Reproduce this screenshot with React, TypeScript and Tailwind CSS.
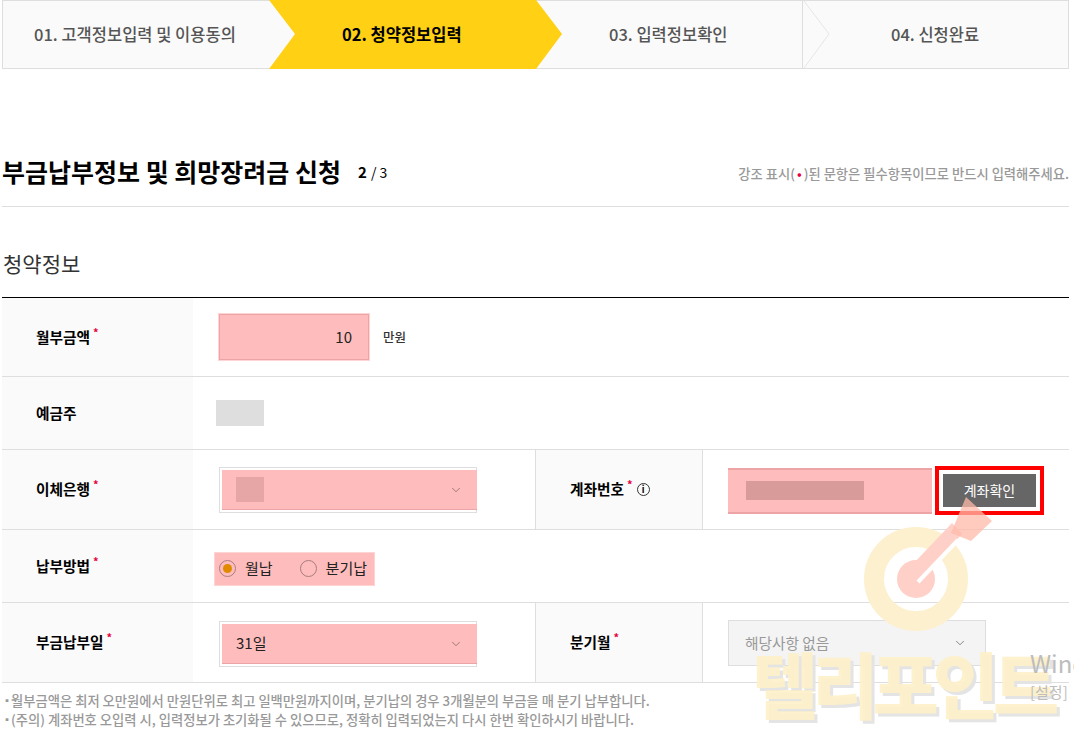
import { ChevronDown } from 'lucide-react';
import type { ReactNode } from 'react';

const Req = () => <span className="relative top-[-5px] ml-[3px] text-[11px] font-bold text-[#e6003c]">*</span>;

const Label = ({ children, wide }: { children: ReactNode; wide?: boolean }) => (
  <div className={`flex shrink-0 items-center bg-[#fafafa] pl-[34px] text-[14.7px] font-bold text-black ${wide ? 'w-[191px]' : 'w-[168px] border-x border-[#dedede]'}`}>
    {children}
  </div>
);

const PinkSelect = ({ children }: { children?: ReactNode }) => (
  <div className="relative h-[46px] w-[258px] border border-[#dedede] bg-white">
    <div className="absolute inset-y-[2px] left-[2px] -right-px flex items-center justify-between border-b border-[#eca4a4] bg-[#ffbcbc] px-[14px] text-[15px] text-[#222]">
      {children}
      <ChevronDown size={14} strokeWidth={1.2} className="ml-auto text-[#7a5a5a]" />
    </div>
  </div>
);

const App = () => {
  return (
    <div className="relative h-[733px] w-[1074px] overflow-hidden bg-white font-['Noto_Sans_CJK_KR','Noto_Sans',sans-serif] text-[#222]">
      <div className="ml-[2px] w-[1067px]">
        {/* Steps */}
        <div className="relative flex h-[69px] border border-[#dedede] bg-[#fafafa] text-[16.5px] font-medium text-[#555]">
          <svg className="absolute left-[265px] top-[-1px]" width="296" height="69" viewBox="0 0 296 69">
            <polygon points="1,0 268,0 294,34 268,69 1,69 27,34" fill="#ffd014" />
          </svg>
          <svg className="absolute left-[800px] top-0" width="28" height="67" viewBox="0 0 28 67">
            <polyline points="1,0 26,33 1,67" fill="none" stroke="#e6e6e6" />
          </svg>
          <div className="flex w-[265px] items-center pl-[31px] pb-[1px]">01. 고객정보입력 및 이용동의</div>
          <div className="relative flex w-[267px] items-center pl-[74px] pb-[1px] font-bold text-black">02. 청약정보입력</div>
          <div className="relative flex w-[267px] items-center pl-[74px] pb-[1px]">03. 입력정보확인</div>
          <div className="relative flex flex-1 items-center border-l border-[#dedede] pl-[88px] pb-[1px]">04. 신청완료</div>
        </div>

        {/* Title */}
        <div className="mt-[69px] flex h-[69px] items-start justify-between border-b border-[#dedede]">
          <div className="flex items-center pt-[15px]">
            <h2 className="text-[25px] font-bold leading-[36px] text-black">부금납부정보 및 희망장려금 신청</h2>
            <span className="ml-[17px] pt-[3px] text-[15px] font-bold text-black">2</span>
            <span className="ml-[4px] pt-[3px] text-[14px] text-black">/ 3</span>
          </div>
          <p className="pt-[26px] text-[13.3px] font-medium text-[#999]">
            강조 표시(<span className="mx-[2px] text-[#e6003c]">•</span>)된 문항은 필수항목이므로 반드시 입력해주세요.
          </p>
        </div>

        <h3 className="mt-[41px] h-[49px] pl-[1px] text-[21px] leading-[30px] text-[#333]">청약정보</h3>

        {/* Form */}
        <div className="border-t border-black text-[14px]">
          <div className="flex h-[79px] border-b border-[#dedede]">
            <Label wide>월부금액<Req /></Label>
            <div className="flex items-center pl-[26px]">
              <div className="flex h-[46px] w-[150px] items-center justify-end border border-[#eca4a4] bg-[#ffbcbc] pr-[16px] text-[15px] text-[#222] outline outline-1 outline-[#ffd4d4]">10</div>
              <span className="ml-[14px] text-[12.5px] font-medium text-[#333]">만원</span>
            </div>
          </div>
          <div className="flex h-[73px] border-b border-[#dedede]">
            <Label wide>예금주</Label>
            <div className="flex items-center pl-[23px]">
              <div className="h-[26px] w-[48px] bg-[#dedede]" />
            </div>
          </div>
          <div className="flex h-[80px] border-b border-[#dedede]">
            <Label wide>이체은행<Req /></Label>
            <div className="w-[342px] pl-[26px] pt-[17px]">
              <PinkSelect>
                <div className="h-[25px] w-[28px] bg-[#e6a6a6]" />
              </PinkSelect>
            </div>
            <Label>계좌번호<Req /><span className="ml-[4px] flex h-[13px] w-[13px] items-center justify-center rounded-full border border-[#333] text-[9px] font-bold leading-none">i</span></Label>
            <div className="relative flex flex-1 items-center pl-[25px] pt-[2px]">
              <div className="flex h-[46px] w-[204px] items-center border-y-2 border-[#eca4a4] bg-[#ffbcbc] pl-[18px]">
                <div className="h-[19px] w-[118px] bg-[#d99a9a]" />
              </div>
              <div className="ml-[3px] border-4 border-[#ff0000] p-[4px]">
                <button className="block h-[33px] w-[93px] bg-[#666] text-[14px] text-white">계좌확인</button>
              </div>
            </div>
          </div>
          <div className="flex h-[73px] border-b border-[#dedede]">
            <Label wide>납부방법<Req /></Label>
            <div className="flex items-center pl-[21px]">
              <div className="mt-[5px] flex h-[34px] w-[161px] items-center border border-[#ffd4d4] bg-[#ffbcbc] pl-[4px] text-[15px] text-[#222]">
                <span className="flex h-[17px] w-[17px] items-center justify-center rounded-full border border-[#a67c7c]">
                  <span className="h-[9px] w-[9px] rounded-full bg-[#e08a00]" />
                </span>
                <span className="ml-[9px]">월납</span>
                <span className="ml-[27px] h-[17px] w-[17px] rounded-full border border-[#a67c7c]" />
                <span className="ml-[9px]">분기납</span>
              </div>
            </div>
          </div>
          <div className="flex h-[80px] border-b border-[#dedede]">
            <Label wide>부금납부일<Req /></Label>
            <div className="w-[342px] pl-[26px] pt-[18px]">
              <PinkSelect>
                <span>31일</span>
              </PinkSelect>
            </div>
            <Label>분기월<Req /></Label>
            <div className="flex-1 pl-[25px] pt-[17px]">
              <div className="flex h-[46px] w-[258px] items-center justify-between border border-[#dedede] bg-[#f4f4f4] pl-[16px] pr-[18px] text-[14.7px] text-[#999]">
                해당사항 없음
                <ChevronDown size={14} strokeWidth={1.2} className="text-[#555]" />
              </div>
            </div>
          </div>
        </div>

        {/* Notes */}
        <ul className="mt-[8px] text-[13.3px] font-medium leading-[19px] text-[#999]">
          <li className="flex whitespace-nowrap"><span className="mr-[7px] w-[2px] text-[10px]">▪</span>월부금액은 최저 오만원에서 만원단위로 최고 일백만원까지이며, 분기납의 경우 3개월분의 부금을 매 분기 납부합니다.</li>
          <li className="flex whitespace-nowrap"><span className="mr-[7px] w-[2px] text-[10px]">▪</span>(주의) 계좌번호 오입력 시, 입력정보가 초기화될 수 있으므로, 정확히 입력되었는지 다시 한번 확인하시기 바랍니다.</li>
        </ul>
      </div>

      {/* Watermark */}
      <svg className="pointer-events-none absolute left-[860px] top-[490px]" width="140" height="150" viewBox="0 0 140 150">
        <circle cx="56" cy="89" r="42" fill="none" stroke="#fdf0cf" strokeWidth="20" />
        <circle cx="56" cy="89" r="19" fill="#ffd0c8" />
        <polygon points="53,74 92,33 102,44 69,80" fill="#ffd0c8" />
        <path d="M58 92 L98 50" stroke="#ffffff" strokeWidth="4" />
        <polygon points="106,7 132,31 111,51 91,43" fill="#ffb9a9" opacity="0.75" />
      </svg>
      <span className="pointer-events-none absolute left-[752px] top-[632px] whitespace-nowrap text-[72px] font-black leading-[100px] tracking-[-6px] text-[#fdefc9]/90 [text-shadow:3px_3px_0_#e4e4e4]">텔리포인트</span>

      {/* Windows activation text */}
      <span className="absolute left-[1030px] top-[648px] whitespace-nowrap text-[24px] leading-[30px] text-[#bdbdbd]">Windows</span>
      <span className="absolute left-[1030px] top-[681px] whitespace-nowrap text-[15px] leading-[22px] text-[#bdbdbd]">[설정]</span>
    </div>
  );
};

export default App;
